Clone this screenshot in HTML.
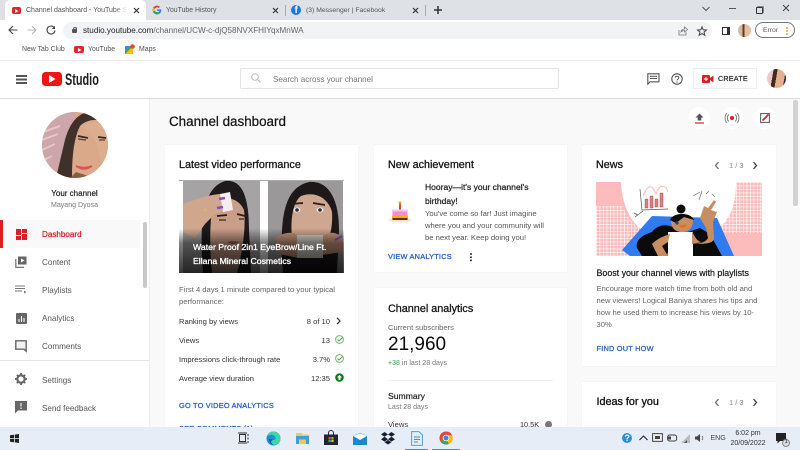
<!DOCTYPE html>
<html lang="en">
<head>
<meta charset="utf-8">
<title>Channel dashboard - YouTube Studio</title>
<style>
html,body{margin:0;padding:0;width:800px;height:450px;overflow:hidden;background:#f9f9f9;}
body{position:relative;font-family:"Liberation Sans",sans-serif;color:#333;filter:blur(.38px);}
.a{position:absolute;}
.t{position:absolute;white-space:nowrap;line-height:14px;font-size:7.600px;color:#333;margin-top:.7px;}
svg{position:absolute;overflow:visible;}
.card{position:absolute;background:#fff;box-shadow:0 0 1px #e8e8e8;}
.h{font-size:10.800px;color:#161616;-webkit-text-stroke:.3px #161616;}
.lnk{font-size:7.400px;color:#2f62c9;-webkit-text-stroke:.3px #2f62c9;letter-spacing:.2px;}
.nav{font-size:8.100px;color:#555;}
.g{color:#666;}
.r{text-align:right;left:auto;right:470px;}
</style>
</head>
<body>
<!-- tab strip -->
<div class="a" style="left:0;top:0;width:800px;height:20px;background:#dee1e6"></div>
<div class="a" style="left:5px;top:0;width:141px;height:20px;background:#fff;border-radius:5px 5px 0 0"></div>
<div class="a" style="left:12px;top:7px;width:9px;height:7px;background:#e3242b;border-radius:2px"></div>
<svg style="left:15px;top:8.500px" width="4" height="4"><path d="M0 0L3.500 2 0 4z" fill="#fff"/></svg>
<div class="t" style="left:26px;top:3px;font-size:7px;color:#555;width:101px;overflow:hidden;-webkit-mask-image:linear-gradient(90deg,#000 88%,transparent)">Channel dashboard - YouTube Studio</div>
<svg style="left:133px;top:7px" width="7" height="7"><path d="M1 1L6 6M6 1L1 6" stroke="#333" stroke-width="1.200"/></svg>
<svg style="left:152px;top:5px" width="10" height="10" viewBox="0 0 10 10"><path d="M9 4.200H5v1.700h2.300A2.500 2.500 0 1 1 6.600 3L7.900 1.800A4.400 4.400 0 1 0 9.400 5z" fill="#4285f4"/><path d="M1.100 3a4.400 4.400 0 0 1 6.800-1.200L6.600 3A2.500 2.500 0 0 0 2.800 3.800z" fill="#ea4335"/><path d="M.9 6.600a4.400 4.400 0 0 1 .2-3.600l1.700 .8a2.500 2.500 0 0 0 0 2z" fill="#fbbc05"/><path d="M.9 6.600l1.900-.8a2.500 2.500 0 0 0 3.600 .9l1.400 1.300A4.400 4.400 0 0 1 .9 6.600z" fill="#34a853"/></svg>
<div class="t" style="left:166px;top:3px;font-size:6.900px;color:#555">YouTube History</div>
<svg style="left:272px;top:7px" width="7" height="7"><path d="M1 1L6 6M6 1L1 6" stroke="#333" stroke-width="1.200"/></svg>
<div class="a" style="left:285px;top:5px;width:1px;height:11px;background:#a9acb0"></div>
<div class="a" style="left:291px;top:5px;width:10px;height:10px;border-radius:50%;background:#1877f2"></div>
<div class="t" style="left:294.500px;top:3.300px;font-size:10px;font-weight:700;color:#fff">f</div>
<div class="t" style="left:306px;top:3px;font-size:6.800px;color:#555">(3) Messenger | Facebook</div>
<svg style="left:412px;top:7px" width="7" height="7"><path d="M1 1L6 6M6 1L1 6" stroke="#333" stroke-width="1.200"/></svg>
<div class="a" style="left:425px;top:5px;width:1px;height:11px;background:#a9acb0"></div>
<svg style="left:434px;top:6px" width="8" height="8"><path d="M4 0V8M0 4H8" stroke="#333" stroke-width="1.500"/></svg>
<svg style="left:702px;top:6px" width="8" height="6"><path d="M.5 1L4 4.500 7.500 1" stroke="#555" fill="none"/></svg>
<div class="a" style="left:729px;top:8px;width:7px;height:1px;background:#555"></div>
<div class="a" style="left:756px;top:7px;width:5px;height:5px;border:1px solid #333;border-radius:1px;box-shadow:1px -1px 0 0 #888"></div>
<svg style="left:782px;top:4px" width="8" height="8"><path d="M1 1L7 7M7 1L1 7" stroke="#444"/></svg>

<!-- toolbar -->
<div class="a" style="left:0;top:20px;width:800px;height:40px;background:#fff"></div>
<svg style="left:8px;top:25px" width="10" height="10"><path d="M9.500 5H1M5 1L1 5 5 9" stroke="#444" stroke-width="1.100" fill="none"/></svg>
<svg style="left:27px;top:25px" width="10" height="10"><path d="M.5 5H9M5 1L9 5 5 9" stroke="#b4b4b4" stroke-width="1.100" fill="none"/></svg>
<svg style="left:46px;top:25px" width="10" height="10"><path d="M8.500 3A4 4 0 1 0 9 5.500" stroke="#444" stroke-width="1.100" fill="none"/><path d="M9 .8V4H5.800z" fill="#444"/></svg>
<div class="a" style="left:63px;top:22px;width:649px;height:16.500px;background:#f1f3f4;border-radius:9px"></div>
<div class="a" style="left:72px;top:29px;width:5px;height:4px;background:#555;border-radius:1px"></div>
<div class="a" style="left:73px;top:26.500px;width:2px;height:3px;border:1px solid #555;border-bottom:0;border-radius:2px 2px 0 0"></div>
<div class="t" style="left:83px;top:23.300px;font-size:8.120px;color:#666"><span style="color:#222">studio.youtube.com</span>/channel/UCW-c-djQ58NVXFHIYqxMnWA</div>
<svg style="left:678px;top:26px" width="10" height="10"><path d="M1 4V9H8V6M3 6C3 4 5 3 6.500 3V1L9.500 3.500 6.500 6V4.500C5 4.500 4 5 3 6z" stroke="#777" stroke-width=".8" fill="none"/></svg>
<svg style="left:697px;top:26px" width="10" height="10"><path d="M5 .8L6.200 3.800 9.500 4 7 6.100 7.800 9.300 5 7.600 2.200 9.300 3 6.100 .5 4 3.800 3.800z" stroke="#444" fill="none"/></svg>
<div class="a" style="left:722px;top:27px;width:4px;height:6px;border:1.200px solid #333;border-right-width:3.500px"></div>
<div class="a" style="left:738px;top:24px;width:13px;height:13px;border-radius:50%;background:linear-gradient(90deg,#d5b9a2 0 35%,#5a3d28 35% 50%,#e8bd9c 50%)"></div>
<div class="a" style="left:755px;top:22px;width:40px;height:16px;box-sizing:border-box;border:1px solid #777;border-radius:9px;background:#fff"></div>
<div class="t" style="left:763px;top:23px;font-size:6.800px;color:#555">Error</div>
<div class="a" style="left:786px;top:27px;width:2px;height:2px;background:#eca23c;box-shadow:0 3px 0 #eca23c,0 6px 0 #eca23c;border-radius:50%"></div>

<!-- bookmarks -->
<div class="t" style="left:22px;top:42px;font-size:6.900px;color:#555">New Tab Club</div>
<div class="a" style="left:74px;top:46px;width:10px;height:7px;background:#e3242b;border-radius:2px"></div>
<svg style="left:77.500px;top:47.500px" width="4" height="4"><path d="M0 0L3.500 2 0 4z" fill="#fff"/></svg>
<div class="t" style="left:88px;top:42px;font-size:6.900px;color:#555">YouTube</div>
<svg style="left:125px;top:44px" width="10" height="10"><rect x="0" y="2" width="8" height="8" fill="#34a853"/><path d="M0 10L8 2V10z" fill="#fbbc05"/><path d="M0 2H5L0 7z" fill="#4285f4"/><circle cx="7.500" cy="2.500" r="2.300" fill="#ea4335"/></svg>
<div class="t" style="left:139px;top:42px;font-size:6.900px;color:#555">Maps</div>
<div class="a" style="left:0;top:60px;width:800px;height:1px;background:#eee"></div>

<!-- studio header -->
<div class="a" style="left:0;top:61px;width:800px;height:37px;background:#fff"></div>
<div class="a" style="left:0;top:98px;width:800px;height:1px;background:#ddd"></div>
<div class="a" style="left:16px;top:75px;width:11px;height:1.500px;background:#555;box-shadow:0 3.500px 0 #555,0 7px 0 #555"></div>
<div class="a" style="left:42px;top:72px;width:20px;height:14px;background:#f01414;border-radius:3.500px"></div>
<svg style="left:49px;top:75px" width="7" height="8"><path d="M0 0L6.500 4 0 8z" fill="#fff"/></svg>
<div class="t" style="left:65px;top:70px;font-size:17px;line-height:18px;font-weight:700;color:#222;transform:scaleX(.64);transform-origin:0 0">Studio</div>
<div class="a" style="left:240px;top:68px;width:319px;height:21px;box-sizing:border-box;border:1px solid #e3e3e3;border-radius:2px;background:#fff"></div>
<svg style="left:251px;top:73px" width="10" height="10"><circle cx="4" cy="4" r="3.300" stroke="#bbb" fill="none"/><path d="M6.500 6.500L9.500 9.500" stroke="#bbb"/></svg>
<div class="t" style="left:273px;top:72px;font-size:8.070px;color:#777">Search across your channel</div>
<svg style="left:647px;top:73px" width="13" height="12"><path d="M.8 .8H12V8.800H3L.8 11z" stroke="#555" stroke-width="1.100" fill="none"/><path d="M3 3.300H10M3 5.500H10" stroke="#555"/></svg>
<svg style="left:671px;top:73px" width="12" height="12"><circle cx="6" cy="6" r="5.200" stroke="#555" stroke-width="1.100" fill="none"/><path d="M4.300 4.800C4.300 2.800 7.800 2.800 7.800 4.800 7.800 6 6 6 6 7.500" stroke="#555" fill="none"/><path d="M6 8.500V9.700" stroke="#555"/></svg>
<div class="a" style="left:693px;top:68px;width:64px;height:21px;box-sizing:border-box;border:1px solid #f0f0f0;background:#fff"></div>
<div class="a" style="left:702px;top:75px;width:8px;height:8px;background:#dc1f26;border-radius:1px"></div>
<svg style="left:710px;top:75px" width="4" height="8"><path d="M0 3L3.500 .5V7.500L0 5z" fill="#dc1f26"/></svg>
<svg style="left:704px;top:77px" width="4" height="4"><path d="M2 0V4M0 2H4" stroke="#fff"/></svg>
<div class="t" style="left:718px;top:71px;font-size:7.200px;color:#333;-webkit-text-stroke:.25px #333;letter-spacing:.2px">CREATE</div>
<div class="a" style="left:767px;top:69px;width:19px;height:19px;border-radius:50%;background:linear-gradient(100deg,#eccaca 0 30%,#3f2b22 30% 48%,#e4b190 48% 85%,#3f2b22 85%)"></div>

<!-- sidebar -->
<div class="a" style="left:0;top:99px;width:149px;height:328px;background:#fff;border-right:1px solid #eee"></div>
<div class="a" style="left:42px;top:112px;width:66px;height:66px;border-radius:50%;overflow:hidden;background:#d9a98a">
  <svg style="left:0;top:0" width="66" height="66">
    <path d="M0 0H34L12 66H0z" fill="#cda6ac"/>
    <path d="M1 20L18 14M0 28L16 22M0 38L13 32M2 48L10 44" stroke="#e6c4c8" stroke-width="2"/>
    <path d="M14 66L22 32C26 14 34 2 46 0 56 0 62 4 66 10 54 6 44 8 38 14 32 26 30 44 30 66z" fill="#40302a"/>
    <path d="M66 14V50L60 56C56 30 50 20 40 14 48 9 58 9 66 14z" fill="#dcae8f"/>
    <path d="M36 24L46 26M56 25L64 26" stroke="#3a2a24" stroke-width="1.800"/>
    <path d="M36 27L44 28M57 28L63 28" stroke="#5a4034" stroke-width="1.200"/>
    <path d="M34 54Q42 60 50 54Q42 57 34 54z" fill="#df505c" stroke="#df505c" stroke-width="1.500"/>
    <path d="M28 66L34 60 52 66z" fill="#8a5c44"/>
  </svg>
</div>
<div class="t" style="left:0;width:149px;text-align:center;top:186px;font-size:8px;color:#222;-webkit-text-stroke:.2px #222">Your channel</div>
<div class="t" style="left:0;width:149px;text-align:center;top:198.500px;font-size:7.050px;color:#777">Mayang Dyosa</div>

<div class="a" style="left:0;top:220px;width:140px;height:28px;background:#f9f9f9"></div>
<div class="a" style="left:0;top:220px;width:2.500px;height:28px;background:#dc1f26"></div>
<div class="a" style="left:143px;top:222px;width:4px;height:66px;background:#c9c9c9;border-radius:2px"></div>
<svg style="left:16px;top:229px" width="11" height="11"><path d="M0 0H5V6H0zM6 0H11V4H6zM0 7H5V11H0zM6 5H11V11H6z" fill="#dc1f26"/></svg>
<div class="t" style="left:42px;top:227px;font-size:8.100px;color:#d4202a;-webkit-text-stroke:.25px #d4202a">Dashboard</div>
<svg style="left:15px;top:256px" width="12" height="12"><path d="M3 .5H11.500V8.500H3z" fill="#666"/><path d="M6 2.500L9.500 4.500 6 6.500z" fill="#fff"/><path d="M.8 3V11.300H9" stroke="#666" stroke-width="1.100" fill="none"/></svg>
<div class="t nav" style="left:42px;top:255px">Content</div>
<svg style="left:15px;top:285px" width="12" height="9"><path d="M0 1H10M0 3.500H10M0 6H7" stroke="#777" stroke-width=".9"/><path d="M9 5.500L11.500 7 9 8.500z" fill="#777"/></svg>
<div class="t nav" style="left:42px;top:283px">Playlists</div>
<div class="a" style="left:16px;top:313px;width:11px;height:11px;background:#666;border-radius:1px"></div>
<svg style="left:16px;top:313px" width="11" height="11"><path d="M3 6V9M5.500 3V9M8 5V9" stroke="#fff" stroke-width="1.100"/></svg>
<div class="t nav" style="left:42px;top:311px">Analytics</div>
<svg style="left:15px;top:340px" width="12" height="12"><path d="M.8 .8H11.200V11.200L9 9.200H.8z" stroke="#666" stroke-width="1.400" fill="#f2f2f2"/></svg>
<div class="t nav" style="left:42px;top:339.500px">Comments</div>
<div class="a" style="left:0;top:360px;width:149px;height:1px;background:#e8e8e8"></div>
<svg style="left:15px;top:373px" width="12" height="12" viewBox="0 0 12 12"><circle cx="6" cy="6" r="3.700" fill="none" stroke="#666" stroke-width="2.200"/><path d="M6 0V12M0 6H12M1.800 1.800L10.200 10.200M10.200 1.800L1.800 10.200" stroke="#666" stroke-width="1.700" stroke-dasharray="2 8 2"/></svg>
<div class="t nav" style="left:42px;top:373px">Settings</div>
<svg style="left:15px;top:401px" width="12" height="13"><path d="M0 0H12V9.500H3L0 12.500z" fill="#666"/><path d="M6 2V5.500M6 6.500V8" stroke="#fff" stroke-width="1.100"/></svg>
<div class="t nav" style="left:42px;top:401px">Send feedback</div>

<!-- main -->
<div class="t" style="left:169px;top:112.300px;line-height:17px;font-size:13.400px;color:#161616;-webkit-text-stroke:.25px #161616">Channel dashboard</div>
<div class="a" style="left:688px;top:107px;width:22px;height:22px;border-radius:50%;background:#fff"></div>
<div class="a" style="left:721px;top:107px;width:22px;height:22px;border-radius:50%;background:#fff"></div>
<div class="a" style="left:754px;top:107px;width:22px;height:22px;border-radius:50%;background:#fff"></div>
<svg style="left:695px;top:113px" width="9" height="11"><path d="M4.500 .5L8.500 4.500H6.300V7.500H2.700V4.500H.5z" fill="#555"/><path d="M0 10H9" stroke="#dc1f26" stroke-width="1.200"/></svg>
<svg style="left:725px;top:112px" width="14" height="12"><circle cx="7" cy="6" r="2" fill="#dc1f26"/><path d="M3.800 2.500a5 5 0 0 0 0 7M10.200 2.500a5 5 0 0 1 0 7M1.800 1a8 8 0 0 0 0 10M12.200 1a8 8 0 0 1 0 10" stroke="#777" fill="none" stroke-width=".9"/></svg>
<svg style="left:760px;top:113px" width="10" height="10"><path d="M.6 .6H9.400V9.400H.6z" stroke="#666" stroke-width="1.100" fill="#fff"/><path d="M2.500 7.500L8.500 1.500" stroke="#dc1f26" stroke-width="1.800"/></svg>
<div class="a" style="left:793px;top:100px;width:5px;height:106px;background:#d2d2d2;border-radius:2px"></div>

<!-- card 1 -->
<div class="card" style="left:165px;top:145px;width:193px;height:282px"></div>
<div class="t h" style="left:179px;top:157px">Latest video performance</div>
<div class="a" style="left:179px;top:180px;width:165px;height:93px;overflow:hidden;background:#fff">
  <div class="a" style="left:4px;top:1px;width:77px;height:92px;background:#a5a3a4"></div>
  <div class="a" style="left:89px;top:1px;width:75px;height:92px;background:#9a9899"></div>
  <div class="a" style="left:0;top:0;width:165px;height:1px;background:#aaa"></div>
  <svg style="left:0;top:0" width="165" height="93">
    <path d="M24 93C20 40 24 8 46 1 62 -1 70 14 70 50L72 93z" fill="#1f1a1b"/>
    <path d="M33 93C30 60 31 34 35 24 45 14 60 18 65 30 67 46 64 70 58 93z" fill="#c99e88"/>
    <path d="M38 36L48 35M58 34L66 36" stroke="#2a1d1a" stroke-width="1.800"/>
    <path d="M40 40L47 40M60 39L65 39" stroke="#362824" stroke-width="1.300"/>
    <path d="M48 62Q54 60 60 62 54 66 48 62z" fill="#a5535a"/>
    <path d="M4 24C20 18 32 14 44 14L48 30 36 34 26 44 16 58 4 52z" fill="#d0a68c"/>
    <path d="M41 14L51 12 54 30 44 32z" fill="#f3eef2"/>
    <path d="M40 19L46 18M38 28L44 27" stroke="#8a4fb5" stroke-width="2.500"/>
    <circle cx="26" cy="30" r="1.300" fill="#dcb84c"/>
    <path d="M104 93C100 40 104 8 130 2 150 0 160 20 160 50L158 93z" fill="#1e1819"/>
    <path d="M114 66C110 40 114 22 122 16 138 10 150 20 153 32 154 50 150 62 142 68z" fill="#cfa690"/>
    <path d="M112 24L124 23M134 23L146 25" stroke="#2a1d1a" stroke-width="1.800"/>
    <ellipse cx="118" cy="30" rx="3.500" ry="2.500" fill="#efe7e2"/><ellipse cx="141" cy="30" rx="3.500" ry="2.500" fill="#efe7e2"/>
    <circle cx="118" cy="30" r="1.800" fill="#2c2c36"/><circle cx="141" cy="30" r="1.800" fill="#2c2c36"/>
    <path d="M96 58C108 50 118 52 122 58L142 58C150 50 158 52 164 58V72L120 78 100 74z" fill="#c59478"/>
    <rect x="118" y="55" width="26" height="23" fill="#d9d4cc"/>
    <path d="M156 60L163 56" stroke="#8a4fb5" stroke-width="2"/>
  </svg>
  <div class="a" style="left:0;top:0;width:165px;height:93px;background:linear-gradient(180deg,rgba(0,0,0,0) 52%,rgba(0,0,0,.5) 68%,rgba(0,0,0,.78) 100%)"></div>
  <div class="t" style="left:14px;top:59px;line-height:14px;font-size:8.700px;color:#fff;-webkit-text-stroke:.3px #fff">Water Proof 2in1 EyeBrow/Line Ft.<br>Ellana Mineral Cosmetics</div>
</div>
<div class="t g" style="left:179px;top:283px;line-height:12px;font-size:7.630px">First 4 days 1 minute compared to your typical<br>performance:</div>
<div class="t" style="left:179px;top:314px">Ranking by views</div>
<div class="t r" style="top:314px">8 of 10</div>
<svg style="left:336px;top:317px" width="5" height="8"><path d="M1 .8L4 4 1 7.200" stroke="#333" stroke-width="1.200" fill="none"/></svg>
<div class="t" style="left:179px;top:333px">Views</div>
<div class="t r" style="top:333px">13</div>
<div class="t" style="left:179px;top:352px">Impressions click-through rate</div>
<div class="t r" style="top:352px">3.7%</div>
<div class="t" style="left:179px;top:371px">Average view duration</div>
<div class="t r" style="top:371px">12:35</div>
<svg style="left:335px;top:335px" width="9" height="9"><circle cx="4.500" cy="4.500" r="3.900" stroke="#6dbb6d" fill="none"/><path d="M2.500 4.500L4 6 7.500 2.500" stroke="#4da64d" fill="none"/></svg>
<svg style="left:335px;top:354px" width="9" height="9"><circle cx="4.500" cy="4.500" r="3.900" stroke="#6dbb6d" fill="none"/><path d="M2.500 4.500L4 6 7.500 2.500" stroke="#4da64d" fill="none"/></svg>
<svg style="left:335px;top:373px" width="9" height="9"><circle cx="4.500" cy="4.500" r="4.300" fill="#0d7a16"/><path d="M4.500 1.800L7 4.500H5.500V7H3.500V4.500H2z" fill="#fff"/></svg>
<div class="t lnk" style="left:179px;top:398px">GO TO VIDEO ANALYTICS</div>
<div class="t lnk" style="left:179px;top:421px">SEE COMMENTS (1)</div>

<!-- card 2 -->
<div class="card" style="left:374px;top:145px;width:193px;height:127px"></div>
<div class="t h" style="left:388px;top:157px">New achievement</div>
<div class="t" style="left:425px;top:179.500px;line-height:14px;font-size:8.550px;color:#222;-webkit-text-stroke:.25px #222">Hooray—it's your channel's<br>birthday!</div>
<div class="t" style="left:425px;top:207px;line-height:12px;font-size:7.650px;color:#555">You've come so far! Just imagine<br>where you and your community will<br>be next year. Keep doing you!</div>
<svg style="left:388px;top:201px" width="24" height="22" viewBox="0 0 24 22"><ellipse cx="12" cy="19" rx="11.500" ry="2.500" fill="#efe8c8"/><path d="M4.500 8.500H19.500V15H4.500z" fill="#f08fd0"/><path d="M4 14.500H20V18H4z" fill="#f0b400"/><path d="M4.500 17H19.500V19H4.500z" fill="#7a2410"/><path d="M11 3H13V8.500H11z" fill="#e34848"/><circle cx="12" cy="1.800" r="1.400" fill="#f0a000"/><path d="M5 9.500H19" stroke="#f7c9e8" stroke-width="2"/></svg>
<div class="t lnk" style="left:388px;top:249px">VIEW ANALYTICS</div>
<div class="a" style="left:470.200px;top:252.500px;width:2.300px;height:2.300px;background:#333;border-radius:50%;box-shadow:0 3.200px 0 #333,0 6.400px 0 #333"></div>

<!-- card 3 -->
<div class="card" style="left:374px;top:288px;width:193px;height:139px"></div>
<div class="t h" style="left:388px;top:301px">Channel analytics</div>
<div class="t g" style="left:388px;top:320px;font-size:7.560px">Current subscribers</div>
<div class="t" style="left:388px;top:332.500px;font-size:19px;line-height:24px;color:#0d0d0d">21,960</div>
<div class="t" style="left:388px;top:356px;font-size:7.050px;color:#777"><span style="color:#3c9a4c">+38</span> in last 28 days</div>
<div class="a" style="left:388px;top:380px;width:165px;height:1px;background:#f0f0f0"></div>
<div class="t" style="left:388px;top:388px;font-size:8.650px;color:#222;-webkit-text-stroke:.2px #222">Summary</div>
<div class="t" style="left:388px;top:400px;font-size:7.050px;color:#777">Last 28 days</div>
<div class="t" style="left:388px;top:417px">Views</div>
<div class="t" style="left:520px;top:417px;font-size:7.300px">10.5K</div>
<div class="a" style="left:544.500px;top:420.500px;width:7px;height:7px;border-radius:50%;background:#777"></div>

<!-- card 4 -->
<div class="card" style="left:582px;top:145px;width:194px;height:221px"></div>
<div class="t h" style="left:596px;top:157px">News</div>
<svg style="left:714px;top:161px" width="6" height="9"><path d="M4.500 1L1.500 4.500 4.500 8" stroke="#666" stroke-width="1.200" fill="none"/></svg>
<div class="t" style="left:729px;top:158.500px;font-size:7.500px;color:#888">1 / 3</div>
<svg style="left:752px;top:161px" width="6" height="9"><path d="M1.500 1L4.500 4.500 1.500 8" stroke="#333" stroke-width="1.200" fill="none"/></svg>
<svg style="left:596px;top:182px" width="166" height="74" viewBox="0 0 166 74">
  <defs><pattern id="gr" width="3.500" height="3.500" patternUnits="userSpaceOnUse"><rect width="3.500" height="3.500" fill="#fbb9b9"/><path d="M0 .4H3.500M.4 0V3.500" stroke="#fff" stroke-width=".6"/></pattern></defs>
  <rect width="166" height="74" fill="#fff"/>
  <path d="M0 0H25C26 24 35 40 46 48L26 68 34 74H0z" fill="#fcbcbc"/>
  <path d="M0 24H27C30 35 38 42 46 48L26 68 34 74H0z" fill="url(#gr)"/>
  <path d="M166 0H140C140 25 133 40 118 50L138 74H166z" fill="url(#gr)"/>
  <path d="M125 51H166V74H138z" fill="#fcbcbc"/>
  <path d="M26 68L56 34 121 36 138 74H34z" fill="#2f7bef"/>
  <path d="M41 66C39 56 50 52 56 50 60 44 68 42 74 44L84 48 70 74H46z" fill="#0b0b0b"/>
  <path d="M92 50L104 46 114 52 126 74H92z" fill="#0b0b0b"/>
  <path d="M72 74V50H97V74z" fill="#fff"/>
  <path d="M56 62C62 56 68 54 74 52L72 60 66 64 72 74H62z" fill="#c98d62"/>
  <path d="M96 49C99 56 102 60 106 60L96 62zM97 62C104 62 110 60 112 56L110 46 104 36 108 24 112 26 118 18 120 20 115 28 121 30 117 40 118 56C118 62 108 62 97 62z" fill="#c98d62"/>
  <path d="M75 38C75 30 97 30 97 38 97 47 92 50 86 50 80 50 75 47 75 38z" fill="#c98d62"/>
  <circle cx="85" cy="27" r="4.500" fill="#0b0b0b"/>
  <path d="M74 38C76 31 94 29 98 38L88 35 80 41z" fill="#0b0b0b"/>
  <circle cx="81" cy="41" r="1.600" fill="#1d3f90"/><path d="M83 44Q87 48 91 43Q87 42 83 44z" fill="#f06a14"/>
  <path d="M44 7L46 28 72 27" stroke="#555" stroke-width=".7" fill="none"/>
  <path d="M49 26V17H52V26zM54 26V14H57V26zM59 25V17H62V25zM64 25V11H67V25z" fill="#ed7a7a" stroke="#555" stroke-width=".4"/>
  <path d="M47 14C52 2 56 2 60 12 63 2 70 2 72 10" stroke="#fbbaba" fill="none"/>
  <path d="M39 35L47 29M42 33L38 31" stroke="#555" stroke-width=".7"/>
  <path d="M97 14L104 10M103 18L106 9M110 12L113 9M116 12L119 15" stroke="#777" stroke-width=".7"/>
</svg>
<div class="t" style="left:596.500px;top:265.500px;font-size:8.850px;color:#222;-webkit-text-stroke:.25px #222">Boost your channel views with playlists</div>
<div class="t" style="left:596.500px;top:282.800px;line-height:11.700px;font-size:7.600px;color:#666">Encourage more watch time from both old and<br>new viewers! Logical Baniya shares his tips and<br>how he used them to increase his views by 10-<br>30%</div>
<div class="t lnk" style="left:596.500px;top:341px">FIND OUT HOW</div>

<!-- card 5 -->
<div class="card" style="left:582px;top:382px;width:194px;height:45px"></div>
<div class="t h" style="left:596.500px;top:394px;-webkit-text-stroke:.35px #161616">Ideas for you</div>
<svg style="left:714px;top:398px" width="6" height="9"><path d="M4.500 1L1.500 4.500 4.500 8" stroke="#666" stroke-width="1.200" fill="none"/></svg>
<div class="t" style="left:729px;top:395px;font-size:7.500px;color:#888">1 / 3</div>
<svg style="left:752px;top:398px" width="6" height="9"><path d="M1.500 1L4.500 4.500 1.500 8" stroke="#333" stroke-width="1.200" fill="none"/></svg>
<div class="t" style="left:596.500px;top:423px;font-size:8.500px;color:#222">Learn when to check notifications</div>

<!-- taskbar -->
<div class="a" style="left:0;top:427px;width:800px;height:23px;background:#e6edf6"></div>
<svg style="left:10px;top:434px" width="9" height="9"><path d="M0 1.300L4 .7V4.200H0zM4.800 .6L9 0V4.200H4.800zM0 5H4V8.300L0 7.700zM4.800 5H9V9L4.800 8.400z" fill="#222"/></svg>
<svg style="left:238px;top:433px" width="11" height="10"><path d="M1.500 1.500H7.500V8.500H1.500z" stroke="#333" fill="none"/><path d="M0 0H9M0 10H9M10 1V3M10 4.500V6.500M10 8V10" stroke="#333"/></svg>
<svg style="left:266px;top:431px" width="15" height="15" viewBox="0 0 15 15"><circle cx="7.500" cy="7.500" r="7" fill="#1b8fd6"/><path d="M14.500 8C14 3 11 .5 7.500 .5 4 .5 1.500 2.500 .8 5.500 3 3 8 3 9.500 6.500 10 8 9 9 7 9 4.500 9 4.500 12 7 13.500 10 15 14 12 14.500 8z" fill="#3fd6a6"/><path d="M3 8C3 11 5 13.500 8 14 5 13 4 9.500 7 9 5 8.500 3 7.500 3 8z" fill="#0c59a4"/></svg>
<svg style="left:296px;top:433px" width="13" height="11"><path d="M0 0H5.500L7 1.500H13V11H0z" fill="#f7c74b"/><path d="M0 3H13V11H10V6.500H3V11H0z" fill="#3f9fde"/></svg>
<svg style="left:324px;top:431px" width="14" height="14"><path d="M0 3.500H14V14H0z" fill="#23272d"/><path d="M4.500 3.500V2A2 2 0 0 1 9.500 2V3.500" stroke="#23272d" fill="none"/><rect x="4.500" y="6" width="2.300" height="2.300" fill="#e84c24"/><rect x="7.300" y="6" width="2.300" height="2.300" fill="#78b82a"/><rect x="4.500" y="8.800" width="2.300" height="2.300" fill="#1fa3e8"/><rect x="7.300" y="8.800" width="2.300" height="2.300" fill="#ffb900"/></svg>
<svg style="left:353px;top:433px" width="14" height="12"><path d="M0 3L7 0 14 3V12H0z" fill="#1a86d3"/><path d="M0 3L7 7 14 3 7 .5z" fill="#fff"/></svg>
<svg style="left:381px;top:432px" width="14" height="12"><path d="M3.500 0L7 2.400 3.500 4.800 0 2.400zM10.500 0L14 2.400 10.500 4.800 7 2.400zM3.500 4.800L7 7.200 3.500 9.600 0 7.200zM10.500 4.800L14 7.200 10.500 9.600 7 7.200zM3.500 10.200L7 8 10.500 10.200 7 12.500z" fill="#16202e"/></svg>
<svg style="left:411px;top:431px" width="12" height="15"><path d="M.6 .6H8L11.400 4V14.400H.6z" fill="#dff0fb" stroke="#5b9fd4"/><path d="M3 6H9M3 8.500H9M3 11H7" stroke="#3b8ecb"/></svg>
<div class="a" style="left:405px;top:448.500px;width:23px;height:1.500px;background:#3f8ed6"></div>
<svg style="left:439px;top:431px" width="14" height="14" viewBox="0 0 15 15"><circle cx="7.500" cy="7.500" r="7" fill="#e8453c"/><path d="M7.500 7.500L1.500 11A7 7 0 0 0 7.500 14.500 7 7 0 0 0 14 10z" fill="#34a853"/><path d="M7.500 .5A7 7 0 0 1 14.500 7.500 7 7 0 0 1 10.500 14L7.500 7.500z" fill="#fbbc05"/><path d="M7.500 .5A7 7 0 0 0 1.500 4L4.500 9 7.500 4.500H14A7 7 0 0 0 7.500 .5z" fill="#e8453c"/><circle cx="7.500" cy="7.500" r="3.500" fill="#fff"/><circle cx="7.500" cy="7.500" r="2.700" fill="#3f84e8"/></svg>
<div class="a" style="left:432px;top:448.500px;width:28px;height:1.500px;background:#3f8ed6"></div>
<div class="a" style="left:622px;top:433px;width:10px;height:10px;border-radius:50%;background:#2a8fd6"></div>
<div class="t" style="left:624.500px;top:430.300px;font-size:9px;font-weight:700;color:#fff">?</div>
<svg style="left:639px;top:435px" width="9" height="6"><path d="M.5 5L4.500 1 8.500 5" stroke="#222" stroke-width="1.100" fill="none"/></svg>
<svg style="left:652px;top:433px" width="11" height="11"><path d="M.6 .6H10.400V8.400H.6z" stroke="#444" fill="#eee"/><rect x="3" y="3" width="5" height="3" fill="#444"/></svg>
<svg style="left:667px;top:434px" width="11" height="8"><rect x=".6" y="1" width="9" height="6" rx="2" stroke="#444" fill="none"/><path d="M1 2.500H4V5.500H1z" fill="#444"/></svg>
<svg style="left:681px;top:434px" width="10" height="9"><path d="M0 9L9 0V9z" fill="#bbb"/><path d="M3 9L6 6V9z" fill="#555"/></svg>
<svg style="left:695px;top:433px" width="10" height="10"><path d="M0 3.500H2L5 1V9L2 6.500H0z" fill="#444"/><path d="M7 3A3 3 0 0 1 7 7" stroke="#777" fill="none"/></svg>
<div class="t" style="left:710.500px;top:431px;font-size:7px;color:#444">ENG</div>
<div class="t" style="left:728px;top:428px;width:40px;text-align:center;line-height:10.500px;font-size:7px;color:#333">6:02 pm<br>20/09/2022</div>
<svg style="left:776px;top:433px" width="14" height="14"><path d="M0 0H10V8H4L1.500 10.500V8H0z" fill="#222"/></svg>
<div class="a" style="left:782px;top:439px;width:8px;height:8px;border-radius:50%;background:#d8dde3;border:1px solid #888;box-sizing:border-box"></div>
<div class="t" style="left:784.500px;top:436.500px;font-size:6px;line-height:10px;color:#333">1</div>
</body>
</html>
